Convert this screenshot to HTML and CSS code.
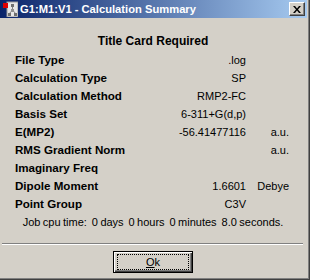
FILE: index.html
```html
<!DOCTYPE html>
<html>
<head>
<meta charset="utf-8">
<link rel="stylesheet" href="styles.css">
</head>
<body>
<div class="window">
  <div class="titlebar">
    <svg class="appicon" width="16" height="16" viewBox="0 0 16 16">
      <rect x="5" y="1" width="11" height="15" fill="#e8e8e8"/>
      <rect x="5" y="1" width="11" height="15" fill="none" stroke="#9a9a9a" stroke-width="1"/>
      <line x1="10.5" y1="5" x2="10.5" y2="9" stroke="#808080"/>
      <line x1="10.5" y1="9" x2="7" y2="13" stroke="#808080"/>
      <line x1="10.5" y1="9" x2="14" y2="13" stroke="#808080"/>
      <rect x="9" y="3" width="3" height="3" fill="#707070"/>
      <rect x="9" y="8" width="3" height="3" fill="#909090"/>
      <rect x="6" y="12" width="3" height="3" fill="#707070"/>
      <rect x="12" y="12" width="3" height="3" fill="#707070"/>
      <rect x="1" y="2" width="5" height="5" fill="#e00000"/>
    </svg>
    <span class="title">G1:M1:V1 - Calculation Summary</span>
    <span class="closebtn">
      <svg width="8" height="7" viewBox="0 0 8 7"><path d="M0 0h2l2 2.5L6 0h2L5 3.5 8 7H6L4 4.5 2 7H0l3-3.5z" fill="#000"/></svg>
    </span>
  </div>
  <div class="content">
    <div class="heading">Title Card Required</div>
    <div class="rows">
      <div class="row"><span class="lbl">File Type</span><span class="val">.log</span><span class="unit"></span></div>
      <div class="row"><span class="lbl">Calculation Type</span><span class="val">SP</span><span class="unit"></span></div>
      <div class="row"><span class="lbl">Calculation Method</span><span class="val">RMP2-FC</span><span class="unit"></span></div>
      <div class="row"><span class="lbl">Basis Set</span><span class="val">6-311+G(d,p)</span><span class="unit"></span></div>
      <div class="row"><span class="lbl">E(MP2)</span><span class="val">-56.41477116</span><span class="unit">a.u.</span></div>
      <div class="row"><span class="lbl">RMS Gradient Norm</span><span class="val"></span><span class="unit">a.u.</span></div>
      <div class="row"><span class="lbl">Imaginary Freq</span><span class="val"></span><span class="unit"></span></div>
      <div class="row"><span class="lbl">Dipole Moment</span><span class="val">1.6601</span><span class="unit">Debye</span></div>
      <div class="row"><span class="lbl">Point Group</span><span class="val">C3V</span><span class="unit"></span></div>
    </div>
    <div class="cpu">Job cpu time:  0 days  0 hours  0 minutes  8.0 seconds.</div>
    <div class="sep"></div>
    <div class="btnrow">
      <button class="okbtn"><span class="focus"><u>O</u>k</span></button>
    </div>
  </div>
</div>
</body>
</html>
```
FILE: styles.css
```css
html, body {
  margin: 0;
  padding: 0;
  width: 310px;
  height: 280px;
  overflow: hidden;
  background: #d4d0c8;
}
.window {
  width: 310px;
  height: 280px;
  box-sizing: border-box;
  border-right: 1px solid #404040;
  border-bottom: 1px solid #404040;
  box-shadow: inset -1px -1px 0 #808080;
  font-family: "Liberation Sans", Arial, sans-serif;
  font-size: 11px;
  color: #000;
  display: flex;
  flex-direction: column;
}
.titlebar {
  height: 18px;
  width: 307px;
  background: linear-gradient(to right, #0a246a, #a6caf0);
  display: flex;
  align-items: center;
}
.appicon {
  margin-left: 2px;
  flex: none;
}
.title {
  color: #fff;
  font-weight: bold;
  font-size: 11.2px;
  margin-left: 2px;
  white-space: nowrap;
}
.closebtn {
  margin-left: auto;
  margin-right: 2px;
  width: 16px;
  height: 14px;
  box-sizing: border-box;
  background: #d4d0c8;
  border-top: 1px solid #fff;
  border-left: 1px solid #fff;
  border-right: 1px solid #404040;
  border-bottom: 1px solid #404040;
  box-shadow: inset -1px -1px 0 #808080;
  display: flex;
  align-items: center;
  justify-content: center;
}
.content {
  width: 306px;
  display: flex;
  flex-direction: column;
}
.heading {
  margin-top: 14px;
  line-height: 18px;
  font-weight: bold;
  font-size: 12px;
  text-align: center;
}
.rows {
  display: flex;
  flex-direction: column;
  margin-top: 1px;
}
.row {
  display: grid;
  grid-template-columns: 150px 81px 43px;
  padding-left: 15px;
  line-height: 18px;
  height: 18px;
}
.lbl {
  font-weight: bold;
  font-size: 11.6px;
  white-space: nowrap;
}
.val, .unit {
  text-align: right;
  white-space: nowrap;
}
.cpu {
  line-height: 18px;
  text-align: center;
  white-space: pre;
  word-spacing: -0.6px;
}
.sep {
  margin: 12px 3px 0 2px;
  height: 0;
  border-top: 1px solid #808080;
  border-bottom: 1px solid #fff;
}
.btnrow {
  display: flex;
  justify-content: center;
  margin-top: 6px;
}
.okbtn {
  width: 80px;
  height: 22px;
  padding: 0;
  margin: 0;
  background: #d4d0c8;
  border: 1px solid #000;
  box-shadow: inset 1px 1px 0 #fff, inset -1px -1px 0 #404040, inset -2px -2px 0 #808080;
  font-family: "Liberation Sans", Arial, sans-serif;
  font-size: 11px;
  color: #000;
  display: flex;
  align-items: center;
  justify-content: center;
}
.focus {
  width: 70px;
  height: 14px;
  line-height: 14px;
  border: 1px dotted #000;
  text-align: center;
}
```
